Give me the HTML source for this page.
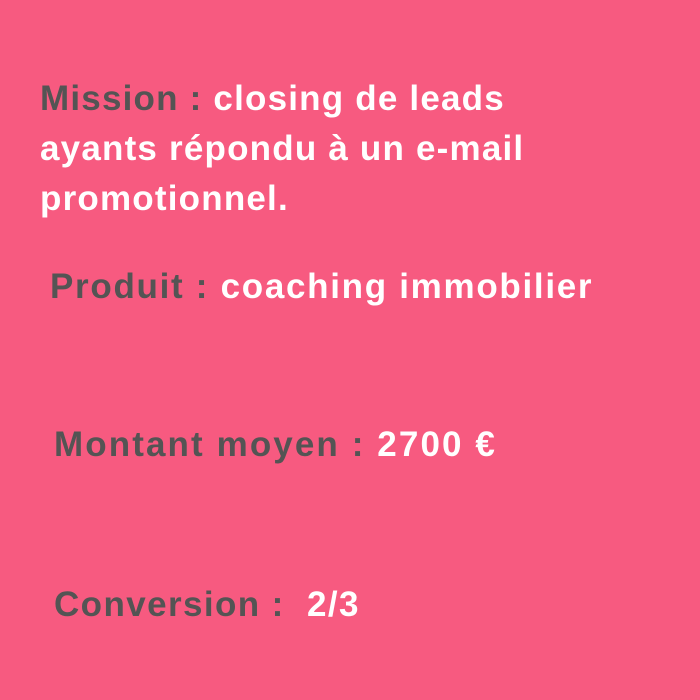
<!DOCTYPE html>
<html><head><style>
body{margin:0;width:700px;height:700px;background:#F75A80;overflow:hidden;font-family:"Liberation Sans",sans-serif;font-weight:bold;font-size:35px;letter-spacing:1.2px;color:#fff}
.l{position:absolute;white-space:nowrap;line-height:1;}
.g{color:#545454}
</style></head><body>
<div class="l" style="left:40px;top:81px"><span class="g">Mission :</span> closing de leads</div>
<div class="l" style="left:40px;top:131px">ayants répondu à un e-mail</div>
<div class="l" style="left:40px;top:181px">promotionnel.</div>
<div class="l" style="left:50px;top:269px;letter-spacing:1.7px"><span class="g">Produit :</span> coaching immobilier</div>
<div class="l" style="left:54px;top:427px;letter-spacing:2.1px"><span class="g">Montant moyen :</span> 2700 €</div>
<div class="l" style="left:54px;top:587px;letter-spacing:1.4px"><span class="g">Conversion :</span>&nbsp; 2/3</div>
</body></html>
